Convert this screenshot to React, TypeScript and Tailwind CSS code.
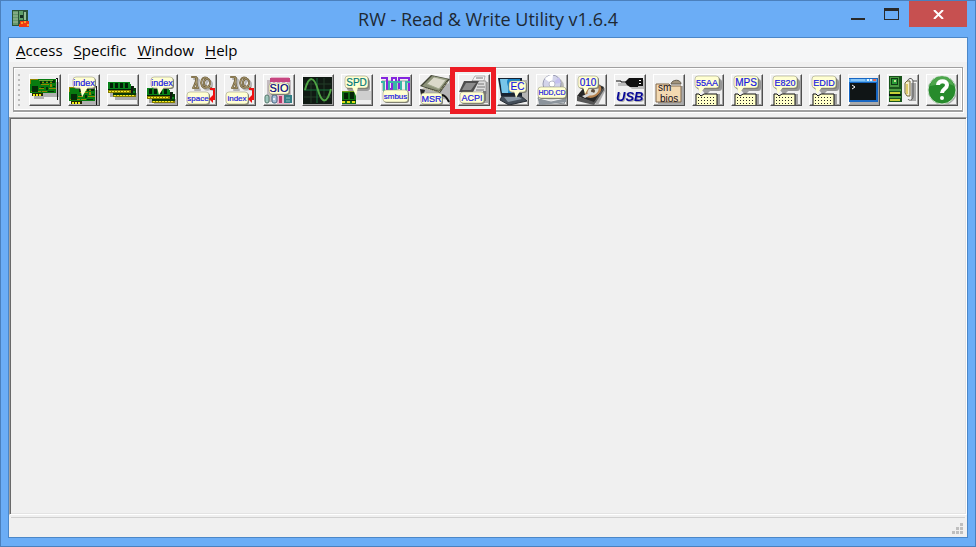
import type { ReactNode } from "react";

function Bubble({
  x, y, w, h, tail, label, size = 10, color = "#1818e0",
}: { x: number; y: number; w: number; h: number; tail?: string; label: string; size?: number; color?: string }) {
  return (
    <g>
      <rect x={x + 1} y={y + 1} width={w} height={h} rx="3" fill="#7d7d74" />
      <rect x={x} y={y} width={w} height={h} rx="3" fill="#ffffd2" stroke="#8f8f70" strokeWidth=".5" />
      {tail && <path d={tail} fill="#ffffd2" />}
      <text
        x={x + w / 2}
        y={y + h - (size < 9 ? 3 : 2)}
        textAnchor="middle"
        fontSize={size}
        fill={color}
        stroke={color}
        strokeWidth=".2"
        className="font-['Liberation_Sans',sans-serif]"
      >
        {label}
      </text>
    </g>
  );
}

function Card({ y = 0 }: { y?: number }) {
  return (
    <g transform={`translate(0 ${y})`} shapeRendering="crispEdges">
      <path d="M4 8h26v15H15v2H5z" fill="#b0b0b0" />
      <path d="M1 5h26v14H14v3H3v-3H1z" fill="#087c10" />
      <path d="M1 5h8v1H2v4H1zM12 10h8v1h-8zM20 14h7v1h-7zM2 17h10v1H2zM13 17h5v1h-5zM21 10h2v3h-2zM10 14h5v1h-5zM11 8h14v1H11z" fill="#938600" />
      <path d="M3 12h6v6H3zM11 7h2v3h-2zM15 7h2v2h-2zM19 7h2v2h-2zM23 6h3v3h-3zM17 13h2v3h-2zM12 13h3v1h-3zM24 12h2v1h-2zM19 17h6v1h-6z" fill="#052d08" />
      <path d="M10 6h14v1H10z" fill="#72a53b" />
      <path d="M3 19h11v3H3z" fill="#222900" />
      <path d="M4 20h2v2H4zM7 20h2v2H7zM10 20h2v2h-2z" fill="#f4ee16" />
      <path d="M28 4h1v22h-1zM27 4h1v1h-1z" fill="#111" />
    </g>
  );
}

function Memory({ y = 0 }: { y?: number }) {
  return (
    <g transform={`translate(0 ${y})`} shapeRendering="crispEdges">
      <path d="M3 19h28v7H8v-3H3z" fill="#aaa" />
      <path d="M6 12h21v2h2v9H6z" fill="#063809" />
      <path d="M7 17h21v2H7zM1 8h22v2h1v9H1z" fill="#08821a" />
      <path d="M6 21h23v2H6zM1 16h23v3H1z" fill="#837c00" />
      <path d="M3 9h3v5H3zM8 9h3v5H8zM13 9h3v5h-3zM18 9h3v5h-3zM1 15h23v1H1z" fill="#031d07" />
      {[2, 5, 8, 11, 14, 17, 20].map((x) => (
        <path key={x} d={`M${x} 17h2v1h-2zM${x + 5} 21h2v1h-2z`} fill="#f5eb22" />
      ))}
      <path d="M24 12h2v7h-2z" fill="#101710" />
    </g>
  );
}

function IoSpace({ label }: { label: string }) {
  const knot = "M7 3h4c1 5-1 7-3 11M12 4c-1 4-1 7 1 10H8M22 4c-5-2-7 4-5 8 2 3 7 2 8-2s-2-6-4-5-3 5-1 7l6 2";
  return (
    <g>
      <g fill="none" strokeLinecap="round" strokeLinejoin="round">
        <path d={knot} transform="translate(2 2)" stroke="#b5b5b5" strokeWidth="2" />
        <path d={knot} stroke="#6b5c39" strokeWidth="2" />
        <path d={knot} stroke="#b5a47a" strokeWidth=".8" />
      </g>
      <Bubble x={2} y={18} w={22} h={12} label={label} size={8} />
      <path d="M25 14h5v12h-2v3l-4-4 4-4v-5h-3z" fill="#f01010" />
    </g>
  );
}

function TablePage({ label, size = 10 }: { label: string; size?: number }) {
  return (
    <g>
      <rect x="6" y="5" width="24" height="12" rx="3" fill="#969696" />
      <path d="M10 16h9l-5 5zM14 20h14v11H14z" fill="#a0a0a0" />
      <path d="M4 20h3l2 2 3-2h13v12H4z" fill="#ffffc9" stroke="#111" />
      <g fill="#222">
        {[23, 26, 29].map((y) => [6, 9, 12, 15, 18, 21].map((x) => <rect key={`${x}-${y}`} x={x} y={y} width="1" height="1" />))}
      </g>
      <Bubble x={3} y={2} w={24} h={12} tail="M6 13h7l-5 7z" label={label} size={size} />
    </g>
  );
}

const tools: { name: string; icon: ReactNode; highlight?: boolean }[] = [
  { name: "PCI devices", icon: <Card /> },
  { name: "PCI index", icon: <><Card y={8} /><Bubble x={5} y={3} w={22} h={11} tail="M12 13h8l-6 10z" label="index" size={9} /></> },
  { name: "Memory", icon: <Memory /> },
  { name: "Memory index", icon: <><Memory y={6} /><Bubble x={5} y={3} w={22} h={11} tail="M11 13h7l-5 8z" label="index" size={9} /></> },
  { name: "IO space", icon: <IoSpace label="space" /> },
  { name: "IO index", icon: <IoSpace label="index" /> },
  {
    name: "Super IO",
    icon: (
      <>
        <path d="M4 6h24v22H4z" fill="#c4bcc0" />
        <path d="M8 3h18v6H8zM14 21h13v9H14z" fill="#e8b4cc" />
        <path d="M7 4h20v4H7z" fill="#c64680" />
        <path d="M8 8h2v1H8zM12 8h2v1h-2zM17 8h2v1h-2zM22 8h2v1h-2z" fill="#fff" />
        <rect x="2" y="21" width="4" height="8" rx="2" fill="#a9cabd" stroke="#527a6e" />
        <rect x="9" y="21" width="5" height="8" rx="2" fill="#a8bfd6" stroke="#456783" /><circle cx="11" cy="25" r="1" fill="white" />
        <path d="M21 21h8v8h-8z" fill="#337e85" /><path d="M16 22h3v7h-3z" fill="#b73a68" />
        <path d="M4 23v4M23 24h4M23 27h4" stroke="#8fc0bd" />
        <Bubble x={6} y={9} w={20} h={11} label="SIO" size={11} color="#000080" />
      </>
    ),
  },
  {
    name: "Clock generator",
    icon: (
      <>
        <path d="M1 3h29v27H1z" fill="#101a13" />
        <path d="M2 10h27M2 23h27M9 4v25M22 4v25" stroke="#223d29" />
        <path d="M2 16h27M15 4v25" stroke="#16713b" />
        <path d="M3 16C7 1 12 2 16 16s9 14 13-1" fill="none" stroke="#50a545" strokeWidth="2" />
      </>
    ),
  },
  {
    name: "SPD",
    icon: (
      <>
        <path d="M15 17h15v9H15z" fill="#cfcfcf" />
        <g shapeRendering="crispEdges">
          <path d="M1 18h14v12H1z" fill="#116f13" />
          <path d="M3 19h4v6H3zM9 18h4v7H9zM1 26h14v1H1z" fill="#052407" />
          <path d="M1 27h3v2H1zM6 27h3v2H6zM11 27h3v2h-3z" fill="#e2dc18" />
          <path d="M1 17h13v1H1z" fill="#6e9c13" />
        </g>
        <rect x="6" y="5" width="23" height="12" rx="3" fill="#9b9b9b" />
        <Bubble x={4} y={2} w={23} h={12} tail="M11 13h6l-2 9z" label="SPD" size={10} color="#007777" />
      </>
    ),
  },
  {
    name: "SMBus",
    icon: (
      <>
        <path d="M3 17V7h9v11h6V7h10v11" fill="none" stroke="#c4c4c4" strokeWidth="2" />
        <path d="M1 4h6v11h5V4h4v11M19 15V4h10v13" fill="none" stroke="#8526df" strokeWidth="2" />
        <path d="M1 8h3v13h5V8h5v13M16 22V8h5v13h5V8h4" fill="none" stroke="#3ab7a6" strokeWidth="2" />
        <Bubble x={3} y={16} w={25} h={12} label="smbus" size={8} />
      </>
    ),
  },
  {
    name: "CPU MSR",
    icon: (
      <>
        <path d="M2 15l12 9 17 2V9z" fill="#b5b5b5" />
        <path d="M1 12L12 1l19 4-10 14z" fill="#414434" />
        <path d="M3 12L13 2l16 3-9 12z" fill="#8c9278" />
        <path d="M8 10l7-7 12 3-7 9z" fill="#dad9ca" stroke="#a1a88e" />
        <path d="M4 14l16 4M20 18l9-11" stroke="#d2cf9f" strokeDasharray="1 1" />
        <path d="M1 15l5 1-3 12z" fill="#262626" />
        <Bubble x={2} y={19} w={21} h={11} label="MSR" size={9} />
        <path d="M23 21c3 0 5 3 7 7" fill="none" stroke="#111" strokeWidth="2" />
      </>
    ),
  },
  {
    name: "ACPI", highlight: true,
    icon: (
      <>
        <path d="M17 8h13v21H17z" fill="#aaa" />
        <path d="M17 2h10l-1 5H14z" fill="#f5f5f5" stroke="#777" strokeWidth=".5" />
        <path d="M14 7h14v13H14z" fill="#ddd" stroke="#666" strokeWidth=".5" />
        <path d="M18 4h7M20 10h6M19 13h8M18 16h8" stroke="#777" />
        <path d="M1 18L6 7h15l-6 11z" fill="#4d4d4d" />
        <path d="M4 16L8 9h10l-5 7z" fill="#8c8c8c" />
        <path d="M25 17h3v10h-3z" fill="#777" />
        <Bubble x={2} y={18} w={24} h={11} label="ACPI" size={9} />
      </>
    ),
  },
  {
    name: "Embedded controller",
    icon: (
      <>
        <path d="M6 6h25v21H9z" fill="#b5b5b5" />
        <path d="M1 4h24v18H4z" fill="#172231" />
        <path d="M3 5h20v14H5z" fill="#1683c6" />
        <path d="M3 5h8c-3 4 2 7 0 14H5z" fill="#78c6e9" />
        <path d="M5 22h19l6 5-18 4-9-5z" fill="#444e59" stroke="#252b33" />
        <path d="M7 23h15l3 2-14 3z" fill="#8796a3" />
        <Bubble x={12} y={7} w={17} h={11} tail="M17 17h6l-4 7z" label="EC" size={10} />
      </>
    ),
  },
  {
    name: "Hard disk and CD",
    icon: (
      <>
        <ellipse cx="18" cy="12" rx="10" ry="9" fill="#bbb" />
        <circle cx="16" cy="10" r="9" fill="#d3d4ea" stroke="#999bb2" />
        <path d="M16 10L9 5a9 9 0 0 1 8-4z" fill="#fff" /><path d="M16 10l7-7 2 6z" fill="#c5c1ef" />
        <circle cx="16" cy="10" r="3" fill="#fff" stroke="#b9bacb" />
        <path d="M2 24l6-7h17l5 7-2 6-13-2-10 3z" fill="#d0d3d6" stroke="#858b90" />
        <path d="M2 24l13 3 15-3v4l-15 2-12 1z" fill="#8c949c" /><path d="M3 24l12 3 14-3" fill="none" stroke="#eee" />
        <Bubble x={2} y={13} w={28} h={11} label="HDD,CD" size={7} />
      </>
    ),
  },
  {
    name: "ATA identify",
    icon: (
      <>
        <path d="M6 21l14-14 11 8-8 16z" fill="#aaa" />
        <path d="M2 22L14 7l15 6-10 16z" fill="#272727" />
        <path d="M2 22v5l17 4 10-15v-3L19 28z" fill="#555" />
        <ellipse cx="18" cy="17" rx="9" ry="6" transform="rotate(-30 18 17)" fill="#b78350" />
        <ellipse cx="18" cy="17" rx="6" ry="4" transform="rotate(-30 18 17)" fill="#dedbd1" />
        <circle cx="18" cy="17" r="2" fill="#5a4938" />
        <path d="M7 22l10-4 2 1-9 5z" fill="#d7d7d7" />
        <Bubble x={3} y={2} w={20} h={12} tail="M8 13h6l-4 7z" label="010" size={10} />
      </>
    ),
  },
  {
    name: "USB",
    icon: (
      <>
        <path d="M4 9h12l5-3h9v9H18l-3-3H4z" fill="#bdbdbd" />
        <path d="M2 7h5v1h6" fill="none" stroke="#111" /><path d="M11 8l4-4h9v9h-8l-3-2z" fill="#111" />
        <path d="M24 4h5v8h-5z" fill="#111" /><path d="M25 6h2v1h-2zM25 9h2v1h-2z" fill="#fff" />
        <text x="2" y="27" fontSize="13" fontWeight="700" fontStyle="italic" fill="#080899" className="font-['Liberation_Sans',sans-serif] drop-shadow-[1px_1px_0_#aaa]">USB</text>
      </>
    ),
  },
  {
    name: "SMBIOS",
    icon: (
      <>
        <path d="M5 12h25v19H5z" fill="#aaa" />
        <path d="M18 10c1-5 10-5 10 0z" fill="#a3957d" stroke="#625b4e" />
        <path d="M3 10h13l2 2h10v16H3z" fill="#f3d9b1" stroke="#80694d" />
        <text x="5" y="17" fontSize="10" fill="#16101a" className="font-['Liberation_Sans',sans-serif]">sm</text>
        <text x="7" y="28" fontSize="10" fill="#16101a" className="font-['Liberation_Sans',sans-serif]">bios</text>
      </>
    ),
  },
  { name: "55AA option ROM", icon: <TablePage label="55AA" size={9} /> },
  { name: "MPS table", icon: <TablePage label="MPS" /> },
  { name: "E820 table", icon: <TablePage label="E820" size={9} /> },
  { name: "EDID table", icon: <TablePage label="EDID" size={9} /> },
  {
    name: "Command prompt",
    icon: (
      <>
        <path d="M2 4h28v26H2z" fill="#aaa" /><path d="M1 4h29v24H1z" fill="#1766c2" />
        <path d="M1 5h28v3H1z" fill="#56a9ee" /><path d="M2 9h26v17H2z" fill="#101516" />
        <path d="M3 6h14" stroke="#bce2ff" /><path d="M19 5h2v2h-2zM22 5h2v2h-2z" fill="#e6f4ff" /><path d="M25 5h3v2h-3z" fill="#e76750" />
        <path d="M4 11l3 2-3 2" fill="none" stroke="#fff" />
      </>
    ),
  },
  {
    name: "Remote access",
    icon: (
      <>
        <path d="M2 2h13v26H2z" fill="#19551c" />
        <path d="M3 3h9v10H3zM2 15h12v2H2zM2 22h12v2H2z" fill="#4b9b43" />
        <path d="M4 4h7v7H4z" fill="#123b17" /><path d="M5 5h5v5H5z" fill="#289c36" /><path d="M7 6h2v2H7z" fill="#c7df97" />
        <path d="M3 18h10v2H3zM3 25h10v2H3z" fill="#c7cf37" /><path d="M2 20h12v2H2z" fill="#05160b" />
        <path d="M24 9h5v18h-5z" fill="#aaa" />
        <path d="M20 8c1-4 5-5 6-1v15c0 5-4 5-5 3M26 7h4" fill="none" stroke="#555" strokeWidth="1" />
        <path d="M18 9l2-2h3v15h-3l-2-3z" fill="#f8f0cb" stroke="#72663a" /><path d="M19 10h2v10h-2z" fill="#dfca69" />
      </>
    ),
  },
  {
    name: "Help",
    icon: (
      <>
        <circle cx="17" cy="17" r="14" fill="#aaa" /><circle cx="16" cy="16" r="14" fill="#278b2c" stroke="#cfe2cf" />
        <path d="M4 12C7-1 25-1 28 12c-6-4-14-2-24 0z" fill="#4da64c" />
        <path d="M12 11c0-5 9-5 9 0 0 4-5 4-5 8" fill="none" stroke="#fff" strokeWidth="4" /><circle cx="16" cy="24" r="2" fill="#fff" />
      </>
    ),
  },
];

function AppIcon() {
  return (
    <svg viewBox="0 0 17 17" className="size-[17px]" aria-hidden="true">
      <path d="M0 0h16v16H0z" fill="#2b5237" /><path d="M1 1h5v14H1z" fill="#63986a" />
      <path d="M1 3h5M1 6h5M1 9h5M1 12h5" stroke="#a3bb9e" />
      <path d="M7 1h4v9H7z" fill="#5f9f68" /><path d="M12 2h2v8h-2z" fill="#93bd95" /><path d="M8 5h3v3H8z" fill="#142e20" />
      <path d="M8 11h9v6H7v-3h1z" fill="#f03914" /><path d="M9 12h2v2H9zM12 11h2v2h-2zM15 14h2v2h-2z" fill="#ff9c28" />
    </svg>
  );
}

function TitleBar() {
  return (
    <header className="relative flex h-9 shrink-0 items-start justify-between pl-[11px] pr-2">
      <div className="pt-[9px]"><AppIcon /></div>
      <h1 className="pointer-events-none absolute inset-x-0 top-1 text-center text-lg leading-7 text-[#1e2934]">RW - Read &amp; Write Utility v1.6.4</h1>
      <div className="flex">
        <button aria-label="Minimize" className="flex h-[26px] w-9 justify-center pt-[17px]"><span className="h-0.5 w-3.5 bg-[#292929]" /></button>
        <button aria-label="Maximize" className="flex h-[26px] w-[30px] justify-center pt-[7px]"><span className="h-3 w-[15px] border border-t-[3px] border-[#292929]" /></button>
        <button aria-label="Close" className="ml-[3px] flex h-[26px] w-[58px] items-center justify-center bg-[#c75050]">
          <svg viewBox="0 0 11 9" className="h-[9px] w-[11px]" aria-hidden="true"><path d="M1 0l9 9M10 0L1 9" stroke="white" strokeWidth="2" /></svg>
        </button>
      </div>
    </header>
  );
}

export default function App() {
  return (
    <div className="flex h-screen flex-col border border-[#4b80bd] bg-[#6badf6] font-['Open_Sans','Noto_Sans',sans-serif]">
      <TitleBar />
      <main className="mx-[7px] mb-2 flex min-h-0 flex-1 flex-col border border-[#4b87c8] bg-[#f0f0f0]">
        <nav className="flex h-6 shrink-0 items-center gap-[11px] bg-[#f5f6f7] px-[7px] text-[15px] leading-6 text-black">
          {["Access", "Specific", "Window", "Help"].map((item) => (
            <button key={item}><span className="underline underline-offset-2">{item[0]}</span>{item.slice(1)}</button>
          ))}
        </nav>
        <div role="toolbar" aria-label="Utilities" className="mx-1 mt-[5px] mb-[5px] flex h-[45px] shrink-0 items-center border border-[#a0a0a0] border-b-2 pt-px pl-1 shadow-[inset_1px_1px_white,inset_-1px_-1px_white,1px_1px_white]">
          <div className="mr-2 flex w-[3px] flex-col gap-[3px]">
            {Array.from({ length: 7 }, (_, i) => <span key={i} className="size-0.5 bg-[#bcbcbc]" />)}
          </div>
          <div className="flex gap-[7px]">
            {tools.map((tool) => (
              <button key={tool.name} aria-label={tool.name} title={tool.name} className="relative size-8 border border-t-white border-r-[#505050] border-b-[#505050] border-l-white bg-[#f0f0f0] shadow-[inset_-1px_-1px_#a0a0a0]">
                <svg viewBox="1 1 30 30" className="block size-[30px]" aria-hidden="true">{tool.icon}</svg>
                {tool.highlight && <span className="absolute -top-2 -right-[7px] -bottom-[9px] -left-[9px] border-5 border-[#ed1c24]" />}
              </button>
            ))}
          </div>
        </div>
        <section aria-label="Workspace" className="min-h-0 flex-1 border border-t-[#a0a0a0] border-r-white border-b-white border-l-[#a0a0a0] shadow-[inset_1px_1px_#696969,inset_-1px_-1px_#e3e3e3]" />
        <footer className="mx-0.5 mt-0.5 flex h-5 shrink-0 items-end justify-end border-t border-[#d0d0d0] pr-0.5 pb-[3px]">
          <div className="grid grid-cols-3 gap-px" aria-hidden="true">
            {[0, 0, 1, 0, 1, 1, 1, 1, 1].map((on, i) => <span key={i} className={on ? "size-[3px] bg-[#bfbfbf]" : "size-[3px]"} />)}
          </div>
        </footer>
      </main>
    </div>
  );
}
